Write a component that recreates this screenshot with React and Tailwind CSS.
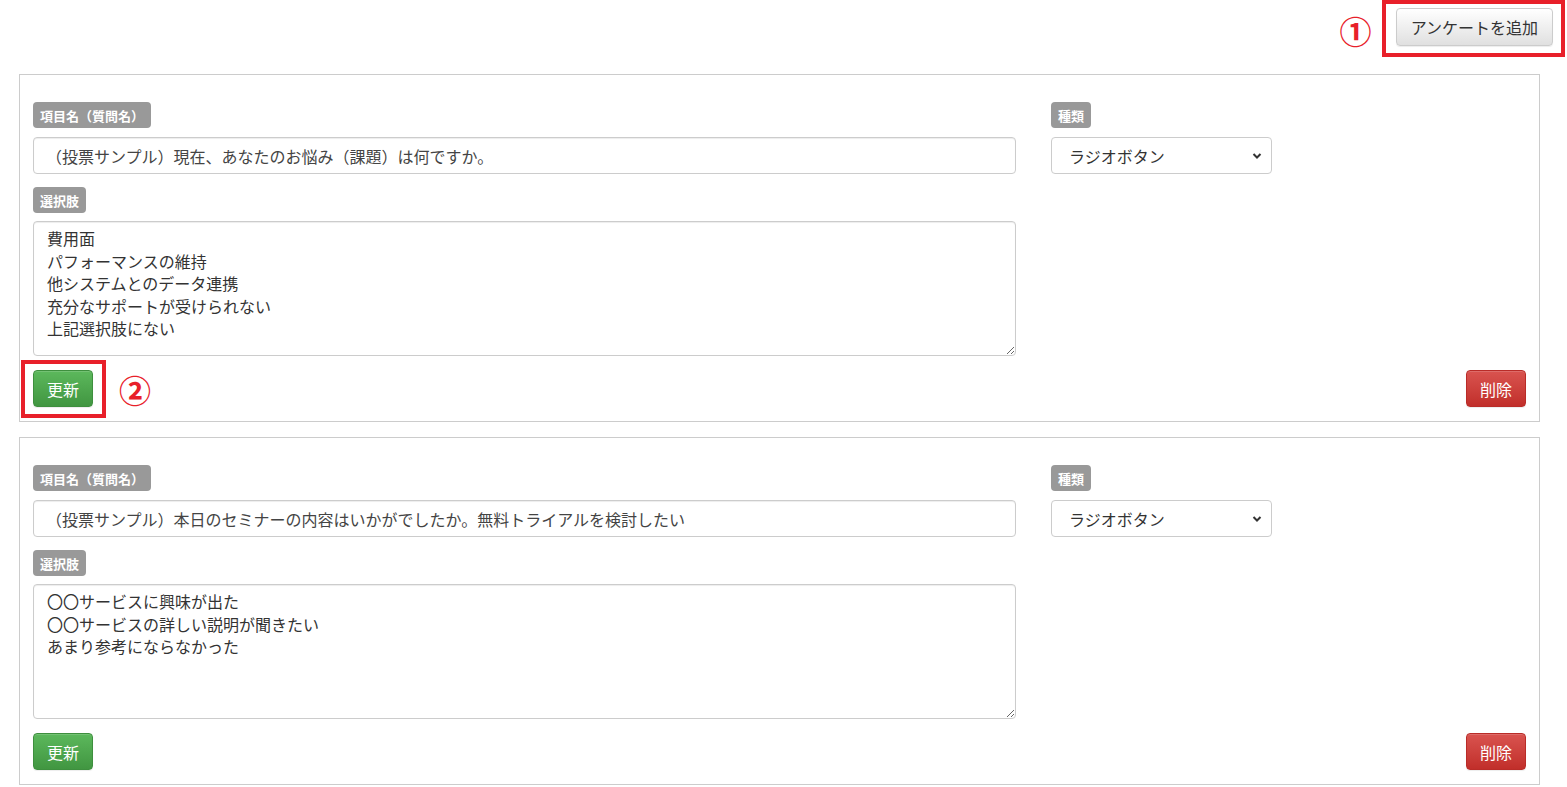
import React from 'react';

const font = { fontFamily: '"Noto Sans CJK JP", "Noto Sans", sans-serif' };

const questions = [
  {
    title: '（投票サンプル）現在、あなたのお悩み（課題）は何ですか。',
    options: ['費用面', 'パフォーマンスの維持', '他システムとのデータ連携', '充分なサポートが受けられない', '上記選択肢にない'],
    marked: true,
  },
  {
    title: '（投票サンプル）本日のセミナーの内容はいかがでしたか。無料トライアルを検討したい',
    options: ['〇〇サービスに興味が出た', '〇〇サービスの詳しい説明が聞きたい', 'あまり参考にならなかった'],
    marked: false,
  },
];

const Label = ({ children }) => (
  <span className="inline-flex h-[26px] items-center self-start rounded-[4px] bg-[#999999] px-[7px] text-[13px] font-bold leading-none text-white">
    {children}
  </span>
);

const Circled = ({ children, className = '' }) => (
  <span className={`text-[32px] font-bold leading-none text-[#e8202a] ${className}`}>{children}</span>
);

const QuestionPanel = ({ q }) => (
  <div className="flex flex-col border border-[#cccccc] bg-white pb-[14px] pl-[13px] pr-[13px] pt-[27px]">
    <div className="flex gap-[35px]">
      {/* 左：質問名・選択肢 */}
      <div className="flex w-[983px] flex-col">
        <Label>項目名（質問名）</Label>
        <input
          readOnly
          value={q.title}
          className="mt-[9px] h-[37px] w-full rounded-[4px] border border-[#cccccc] px-[12px] text-[16px] text-[#444] shadow-[inset_0_1px_1px_rgba(0,0,0,0.075)] outline-none"
        />
        <div className="mt-[13px] flex">
          <Label>選択肢</Label>
        </div>
        <textarea
          readOnly
          value={q.options.join('\n')}
          className="mt-[8px] h-[135px] w-full rounded-[4px] border border-[#cccccc] px-[13px] pt-[5px] text-[16px] leading-[22.5px] text-[#333] shadow-[inset_0_1px_1px_rgba(0,0,0,0.075)] outline-none"
        />
      </div>

      {/* 右：種類 */}
      <div className="flex w-[221px] flex-col">
        <Label>種類</Label>
        <div className="relative mt-[9px]">
          <select className="h-[37px] w-full appearance-none rounded-[4px] border border-[#cccccc] bg-white pl-[17px] text-[16px] text-[#333] outline-none">
            <option>ラジオボタン</option>
          </select>
          <svg className="pointer-events-none absolute right-[10px] top-[15px]" width="10" height="8" viewBox="0 0 10 8">
            <path d="M1.5 2 L5 5.5 L8.5 2" fill="none" stroke="#333" strokeWidth="2" />
          </svg>
        </div>
      </div>
    </div>

    <div className="mt-[14px] flex items-center justify-between">
      <div className="flex items-center">
        <div className="relative">
          <button className="h-[37px] rounded-[4px] border border-[#3e8f3e] bg-linear-to-b from-[#5cb85c] to-[#419641] px-[13px] text-[16px] text-white shadow-[inset_0_1px_0_rgba(255,255,255,0.15),0_1px_1px_rgba(0,0,0,0.075)]">
            更新
          </button>
          {q.marked && (
            <span className="pointer-events-none absolute -bottom-[11px] -left-[12px] -right-[13px] -top-[10px] border-4 border-[#e8202a]" />
          )}
        </div>
        {q.marked && <Circled className="ml-[26px]">②</Circled>}
      </div>
      <button className="h-[37px] rounded-[4px] border border-[#b92c28] bg-linear-to-b from-[#d9534f] to-[#c12e2a] px-[13px] text-[16px] text-white shadow-[inset_0_1px_0_rgba(255,255,255,0.15),0_1px_1px_rgba(0,0,0,0.075)]">
        削除
      </button>
    </div>
  </div>
);

export default function App() {
  return (
    <div className="min-h-[787px] w-full bg-white" style={font}>
      {/* 追加ボタン */}
      <div className="flex h-[74px] items-start justify-end pr-[2px]">
        <Circled className="mr-[10px] mt-[14px]">①</Circled>
        <div className="flex h-[57px] items-start border-4 border-[#e8202a] pl-[10px] pr-[8px] pt-[4px]">
          <button className="h-[38px] rounded-[4px] border border-[#cccccc] bg-linear-to-b from-[#ffffff] to-[#e0e0e0] px-[14px] text-[16px] text-[#333] shadow-[inset_0_1px_0_rgba(255,255,255,0.15),0_1px_1px_rgba(0,0,0,0.075)]">
            アンケートを追加
          </button>
        </div>
      </div>

      <div className="flex flex-col gap-[15px] pl-[19px] pr-[27px]">
        {questions.map((q, i) => (
          <QuestionPanel key={i} q={q} />
        ))}
      </div>
    </div>
  );
}
